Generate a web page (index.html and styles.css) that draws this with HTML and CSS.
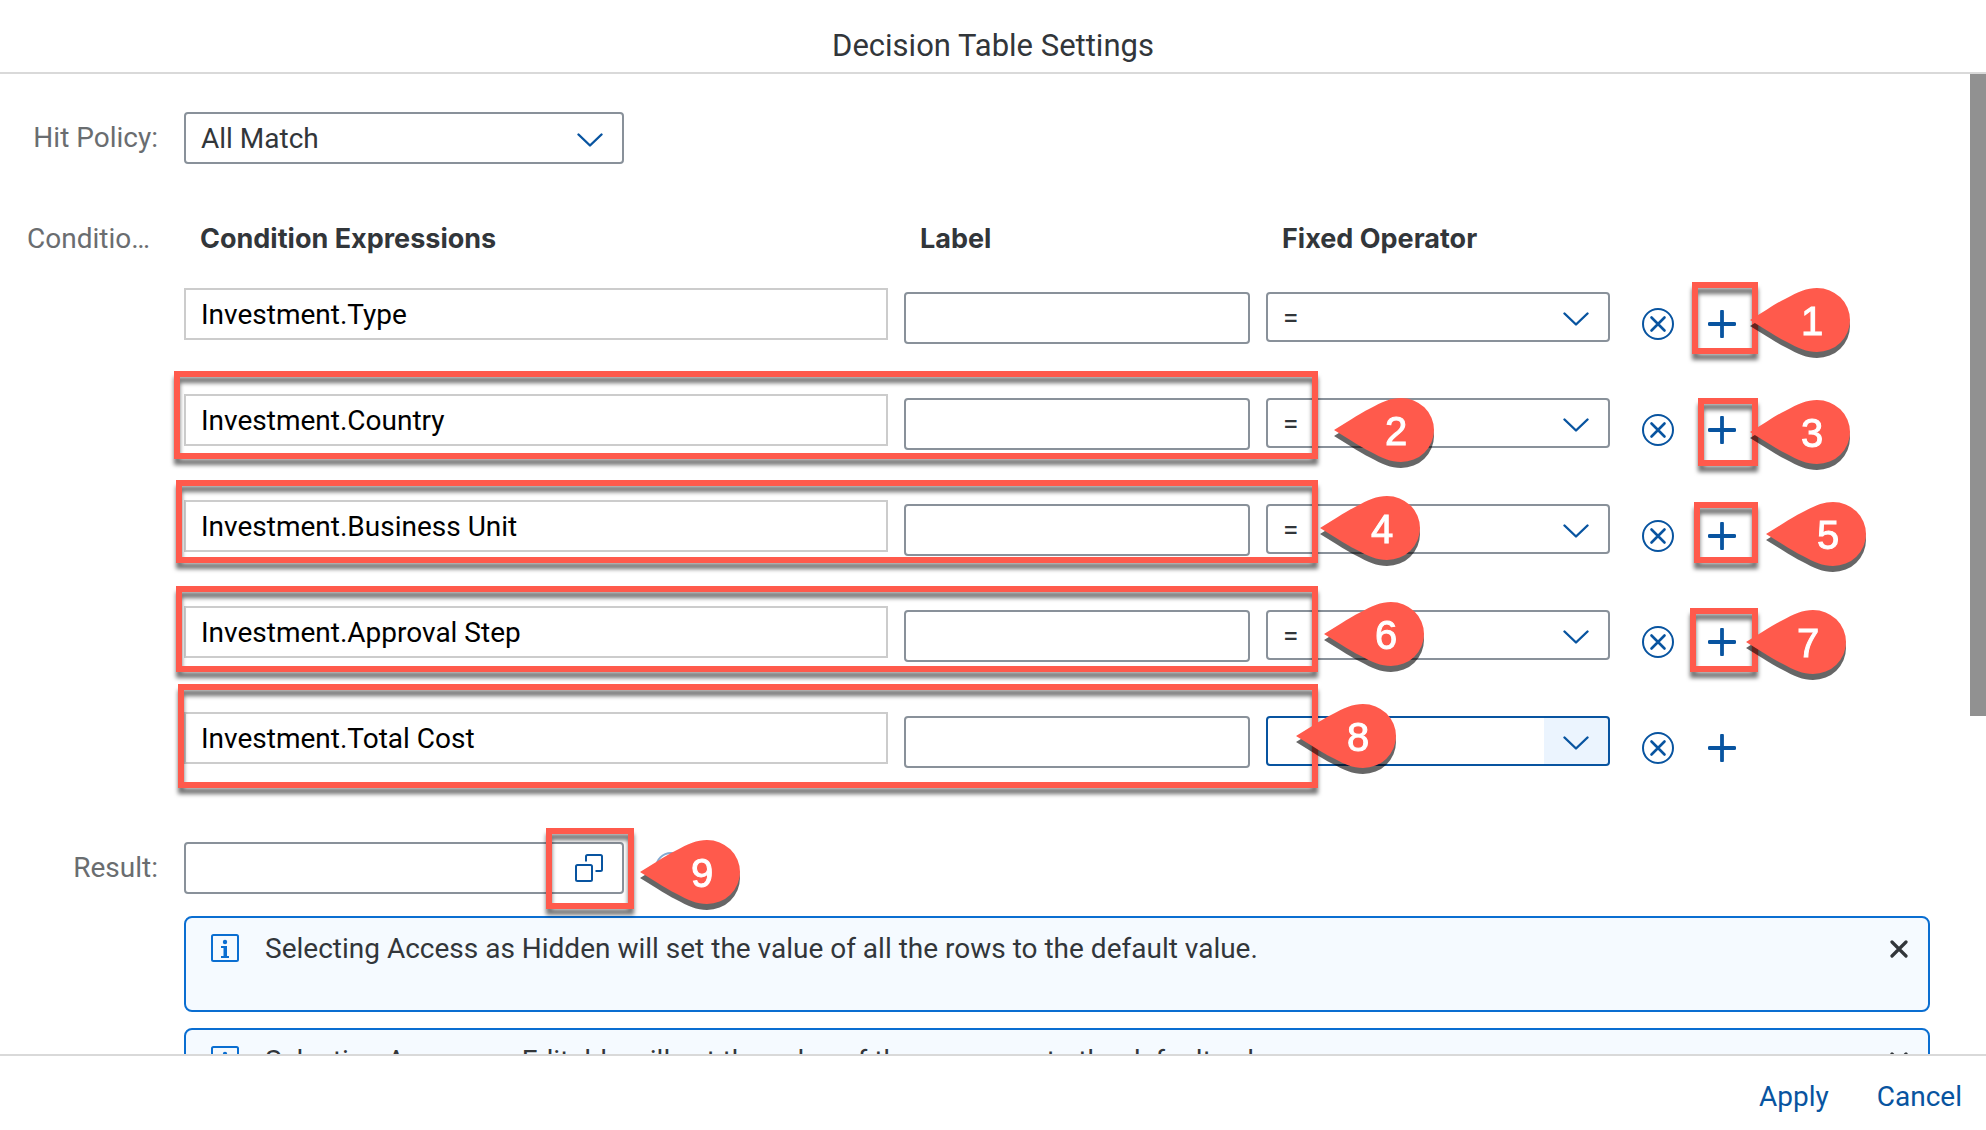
FILE: index.html
```html
<!DOCTYPE html>
<html lang="en">
<head>
<meta charset="utf-8">
<meta name="viewport" content="width=device-width, initial-scale=1">
<title>Decision Table Settings</title>
<link rel="stylesheet" href="styles.css">
</head>
<body>
<svg class="defs" aria-hidden="true">
  <symbol id="chevron" viewBox="0 0 26 14"><path d="M1.5 1.5 13 12.5 24.500 1.500" fill="none" stroke="currentColor" stroke-width="2.400" stroke-linecap="round" stroke-linejoin="round"/></symbol>
  <symbol id="decline" viewBox="0 0 32 32"><circle cx="16" cy="16" r="15" fill="none" stroke="currentColor" stroke-width="2"/><path d="M9.500 9.500 22.500 22.500M22.500 9.500 9.500 22.500" fill="none" stroke="currentColor" stroke-width="2.600" stroke-linecap="round"/></symbol>
  <symbol id="add" viewBox="0 0 28 28"><path d="M14 1.500V26.500M1.500 14H26.500" fill="none" stroke="currentColor" stroke-width="3.800" stroke-linecap="round"/></symbol>
  <symbol id="value-help" viewBox="0 0 28 28"><rect x="1" y="11" width="16" height="16" rx="1.500" fill="none" stroke="currentColor" stroke-width="2"/><path d="M11 7.500V2.500Q11 1 12.500 1H25.500Q27 1 27 2.500V15.500Q27 17 25.500 17H20.500" fill="none" stroke="currentColor" stroke-width="2"/></symbol>
  <symbol id="info" viewBox="0 0 28 28"><rect x="1" y="1" width="26" height="26" rx="1.500" fill="none" stroke="currentColor" stroke-width="2"/><circle cx="14" cy="8" r="2.200" fill="currentColor"/><path d="M10 12H16V22H18V24H10V22H12.500V14H10Z" fill="currentColor"/></symbol>
  <symbol id="close" viewBox="0 0 18 18"><path d="M2 2 16 16M16 2 2 16" fill="none" stroke="currentColor" stroke-width="3.200" stroke-linecap="round"/></symbol>
  <symbol id="pin" viewBox="0 0 100 64"><path d="M0 32L17 21.500C24 17 30 13.500 36 10.500C48 4 57 0 67 0A33 32 0 0 1 67 64C57 64 48 60 36 53.500C30 50.500 24 47 17 42.500Z" fill="currentColor"/></symbol>
</svg>

<header class="dialog-header"><h1>Decision Table Settings</h1></header>

<main class="dialog-body">
  <form class="form" id="settings">
    <div class="field-row">
      <label class="field-label" for="hit">Hit Policy:</label>
      <div class="select short"><select id="hit"><option>All Match</option></select><svg><use href="#chevron"/></svg></div>
    </div>

    <div class="field-row conditions" role="group" aria-labelledby="cond">
      <span class="field-label group-label" id="cond">Conditio…</span>
      <div class="grid">
        <div class="row head"><span id="h1">Condition Expressions</span><span id="h2">Label</span><span id="h3">Fixed Operator</span></div>

        <div class="row">
          <input class="expression" aria-labelledby="h1" value="Investment.Type" readonly>
          <input class="text" aria-labelledby="h2">
          <div class="select"><select aria-labelledby="h3"><option>=</option></select><svg><use href="#chevron"/></svg></div>
          <button class="icon-button" type="button" aria-label="Remove"><svg class="i32"><use href="#decline"/></svg></button>
          <button class="icon-button" type="button" aria-label="Add"><svg class="i28"><use href="#add"/></svg></button>
          <span class="mark on-add m1"></span>
          <span class="pin on-add p1"><svg><use href="#pin"/></svg><b>1</b></span>
        </div>

        <div class="row">
          <input class="expression" aria-labelledby="h1" value="Investment.Country" readonly>
          <input class="text" aria-labelledby="h2">
          <div class="select"><select aria-labelledby="h3"><option>=</option></select><svg><use href="#chevron"/></svg></div>
          <button class="icon-button" type="button" aria-label="Remove"><svg class="i32"><use href="#decline"/></svg></button>
          <button class="icon-button" type="button" aria-label="Add"><svg class="i28"><use href="#add"/></svg></button>
          <span class="mark wide m2"></span>
          <span class="mark on-add m3"></span>
          <span class="pin on-operator p2"><svg><use href="#pin"/></svg><b>2</b></span>
          <span class="pin on-add p3"><svg><use href="#pin"/></svg><b>3</b></span>
        </div>

        <div class="row">
          <input class="expression" aria-labelledby="h1" value="Investment.Business Unit" readonly>
          <input class="text" aria-labelledby="h2">
          <div class="select"><select aria-labelledby="h3"><option>=</option></select><svg><use href="#chevron"/></svg></div>
          <button class="icon-button" type="button" aria-label="Remove"><svg class="i32"><use href="#decline"/></svg></button>
          <button class="icon-button" type="button" aria-label="Add"><svg class="i28"><use href="#add"/></svg></button>
          <span class="mark wide m4"></span>
          <span class="mark on-add m5"></span>
          <span class="pin on-operator p4"><svg><use href="#pin"/></svg><b>4</b></span>
          <span class="pin on-add p5"><svg><use href="#pin"/></svg><b>5</b></span>
        </div>

        <div class="row">
          <input class="expression" aria-labelledby="h1" value="Investment.Approval Step" readonly>
          <input class="text" aria-labelledby="h2">
          <div class="select"><select aria-labelledby="h3"><option>=</option></select><svg><use href="#chevron"/></svg></div>
          <button class="icon-button" type="button" aria-label="Remove"><svg class="i32"><use href="#decline"/></svg></button>
          <button class="icon-button" type="button" aria-label="Add"><svg class="i28"><use href="#add"/></svg></button>
          <span class="mark wide m6"></span>
          <span class="mark on-add m7"></span>
          <span class="pin on-operator p6"><svg><use href="#pin"/></svg><b>6</b></span>
          <span class="pin on-add p7"><svg><use href="#pin"/></svg><b>7</b></span>
        </div>

        <div class="row">
          <input class="expression" aria-labelledby="h1" value="Investment.Total Cost" readonly>
          <input class="text" aria-labelledby="h2">
          <div class="select hovered"><select aria-labelledby="h3"><option></option></select><svg><use href="#chevron"/></svg></div>
          <button class="icon-button" type="button" aria-label="Remove"><svg class="i32"><use href="#decline"/></svg></button>
          <button class="icon-button" type="button" aria-label="Add"><svg class="i28"><use href="#add"/></svg></button>
          <span class="mark wide m8"></span>
          <span class="pin on-operator p8"><svg><use href="#pin"/></svg><b>8</b></span>
        </div>
      </div>
    </div>

    <div class="field-row result">
      <label class="field-label" for="result">Result:</label>
      <div class="result-controls">
        <div class="value-help short">
          <input id="result">
          <button type="button" aria-label="Choose result"><svg class="i28"><use href="#value-help"/></svg></button>
        </div>
        <button class="icon-button clear" type="button" aria-label="Clear result" disabled><svg class="i32"><use href="#decline"/></svg></button>
        <span class="mark m9"></span>
        <span class="pin p9"><svg><use href="#pin"/></svg><b>9</b></span>
      </div>
    </div>

    <div class="messages">
      <div class="message"><svg class="i28"><use href="#info"/></svg><p>Selecting Access as Hidden will set the value of all the rows to the default value.</p><button type="button" aria-label="Close"><svg class="i18"><use href="#close"/></svg></button></div>
      <div class="message"><svg class="i28"><use href="#info"/></svg><p>Selecting Access as Editable will set the value of the new rows to the default value.</p><button type="button" aria-label="Close"><svg class="i18"><use href="#close"/></svg></button></div>
    </div>
  </form>
  <div class="scroll-thumb"></div>
</main>

<footer class="dialog-footer">
  <button type="submit" form="settings">Apply</button>
  <button type="button">Cancel</button>
</footer>
</body>
</html>
```
FILE: styles.css
```css
:root {
  --text: #32363a;
  --muted: #6a6d70;
  --link: #0854a0;
  --border: #89919a;
  --line: #d9d9d9;
  --info: #0a6ed1;
  --mark: #ff5a4c;
}

* { box-sizing: border-box; }

body {
  margin: 0;
  height: 100vh;
  display: flex;
  flex-direction: column;
  background: #fff;
  color: var(--text);
  font: 28px/36px Roboto, "Liberation Sans", sans-serif;
}

input, select, button { font: inherit; color: inherit; margin: 0; }
button { border: 0; padding: 0; background: none; color: var(--link); cursor: pointer; }
svg { display: block; flex: none; }
.defs { position: absolute; width: 0; height: 0; }
.i32 { width: 32px; height: 32px; }
.i28 { width: 28px; height: 28px; }
.i18 { width: 18px; height: 18px; }

.dialog-header { padding: 28px 0 8px; border-bottom: 2px solid var(--line); text-align: center; }
.dialog-header h1 { margin: 0; font-size: 31px; line-height: 36px; font-weight: 400; }

.dialog-body { position: relative; flex: 1; min-height: 0; overflow: hidden; }
.scroll-thumb { position: absolute; top: 0; right: 0; width: 16px; height: 642px; background: #919191; }

.form { padding: 38px 56px 0 0; }
.field-row { display: grid; grid-template-columns: 160px minmax(0, 1fr); column-gap: 24px; }
.field-label { color: var(--muted); text-align: right; line-height: 52px; padding-right: 2px; white-space: nowrap; }
.group-label { line-height: 38px; padding-right: 10px; }
.short { width: 440px; }

.select { position: relative; height: 50px; }
.select.short { height: 52px; }
.select select {
  appearance: none;
  width: 100%;
  height: 100%;
  padding: 2px 64px 0 15px;
  border: 2px solid var(--border);
  border-radius: 4px;
  background: #fff;
}
.select svg { position: absolute; right: 21px; top: 50%; margin-top: -5px; width: 26px; height: 14px; color: var(--link); pointer-events: none; }
.select.hovered select {
  border-color: var(--link);
  background: linear-gradient(#ebf4fe, #ebf4fe) right / 64px 100% no-repeat #fff;
}

.conditions { margin-top: 56px; }
.grid { display: grid; row-gap: 38px; }
.row {
  position: relative;
  display: grid;
  grid-template-columns: minmax(0, 704fr) minmax(0, 346fr) minmax(0, 344fr) 64px 32px;
  column-gap: 16px;
  align-items: start;
  height: 68px;
  padding-right: 192px;
}
.head { height: 30px; font: 700 27px/38px Inter, sans-serif; }
.head span { padding-left: 16px; white-space: nowrap; }
.expression, .text { width: 100%; height: 52px; padding: 0 15px; background: #fff; }
.expression { border: 2px solid #ccc; color: #000; }
.text { border: 2px solid var(--border); border-radius: 4px; }
.row .text, .row .select, .row .icon-button { margin-top: 4px; }
.icon-button { height: 64px; display: flex; align-items: center; justify-content: center; }

.result { margin-top: 62px; }
.result-controls { position: relative; display: flex; align-items: center; height: 52px; }
.value-help { display: flex; height: 52px; border: 2px solid var(--border); border-radius: 4px; }
.value-help input { flex: 1; min-width: 0; border: 0; padding: 0 15px; background: none; }
.value-help button { width: 66px; display: flex; align-items: center; justify-content: center; }
.clear { width: 94px; opacity: .5; }

.messages { display: grid; row-gap: 16px; margin: 22px 0 0 184px; }
.message {
  display: flex;
  align-items: flex-start;
  height: 96px;
  padding: 12px 20px 12px 25px;
  border: 2px solid var(--info);
  border-radius: 8px;
  background: #f5faff;
}
.message > svg { margin-top: 4px; color: var(--info); }
.message p { flex: 1; margin: 0 26px; line-height: 38px; }
.message button { height: 38px; display: flex; align-items: center; color: var(--text); }

.dialog-footer {
  display: flex;
  justify-content: flex-end;
  gap: 48px;
  padding: 23px 24px 15px;
  border-top: 2px solid var(--line);
}

/* Tutorial callouts laid over the form */
.mark {
  position: absolute;
  border: 6px solid var(--mark);
  filter: drop-shadow(0 6px 2px rgba(0, 0, 0, .55));
  pointer-events: none;
}
.pin {
  position: absolute;
  width: 100px;
  height: 64px;
  color: var(--mark);
  filter: drop-shadow(0 6px 0 rgba(0, 0, 0, .6));
  pointer-events: none;
}
.pin svg { width: 100px; height: 64px; }
.pin b {
  position: absolute;
  inset: 0 0 0 24px;
  color: #fff;
  font: 400 40px/66px "Liberation Sans", sans-serif;
  -webkit-text-stroke: 1px #fff;
  text-align: center;
}
.wide { grid-column: 1 / 3; right: -68px; }
.on-operator { grid-column: 3; }
.on-add { grid-column: 5; }

.m1 { left: -14px; top: -6px; width: 66px; height: 72px; }
.m2 { left: -10px; top: -23px; height: 88px; }
.m3 { left: -8px; top: 4px; width: 60px; height: 68px; }
.m4 { left: -8px; top: -20px; height: 83px; }
.m5 { left: -12px; top: 2px; width: 64px; height: 61px; }
.m6 { left: -8px; top: -20px; height: 86px; }
.m7 { left: -16px; top: 2px; width: 68px; height: 64px; }
.m8 { left: -6px; top: -28px; height: 104px; }
.m9 { left: 362px; top: -14px; width: 88px; height: 81px; }

.p1 { left: 44px; top: 0; }
.p2 { left: 68px; top: 4px; }
.p3 { left: 44px; top: 6px; }
.p4 { left: 54px; top: -4px; }
.p5 { left: 60px; top: 2px; }
.p6 { left: 58px; top: -4px; }
.p7 { left: 40px; top: 4px; }
.p8 { left: 30px; top: -8px; }
.p9 { left: 456px; top: -2px; }
```
